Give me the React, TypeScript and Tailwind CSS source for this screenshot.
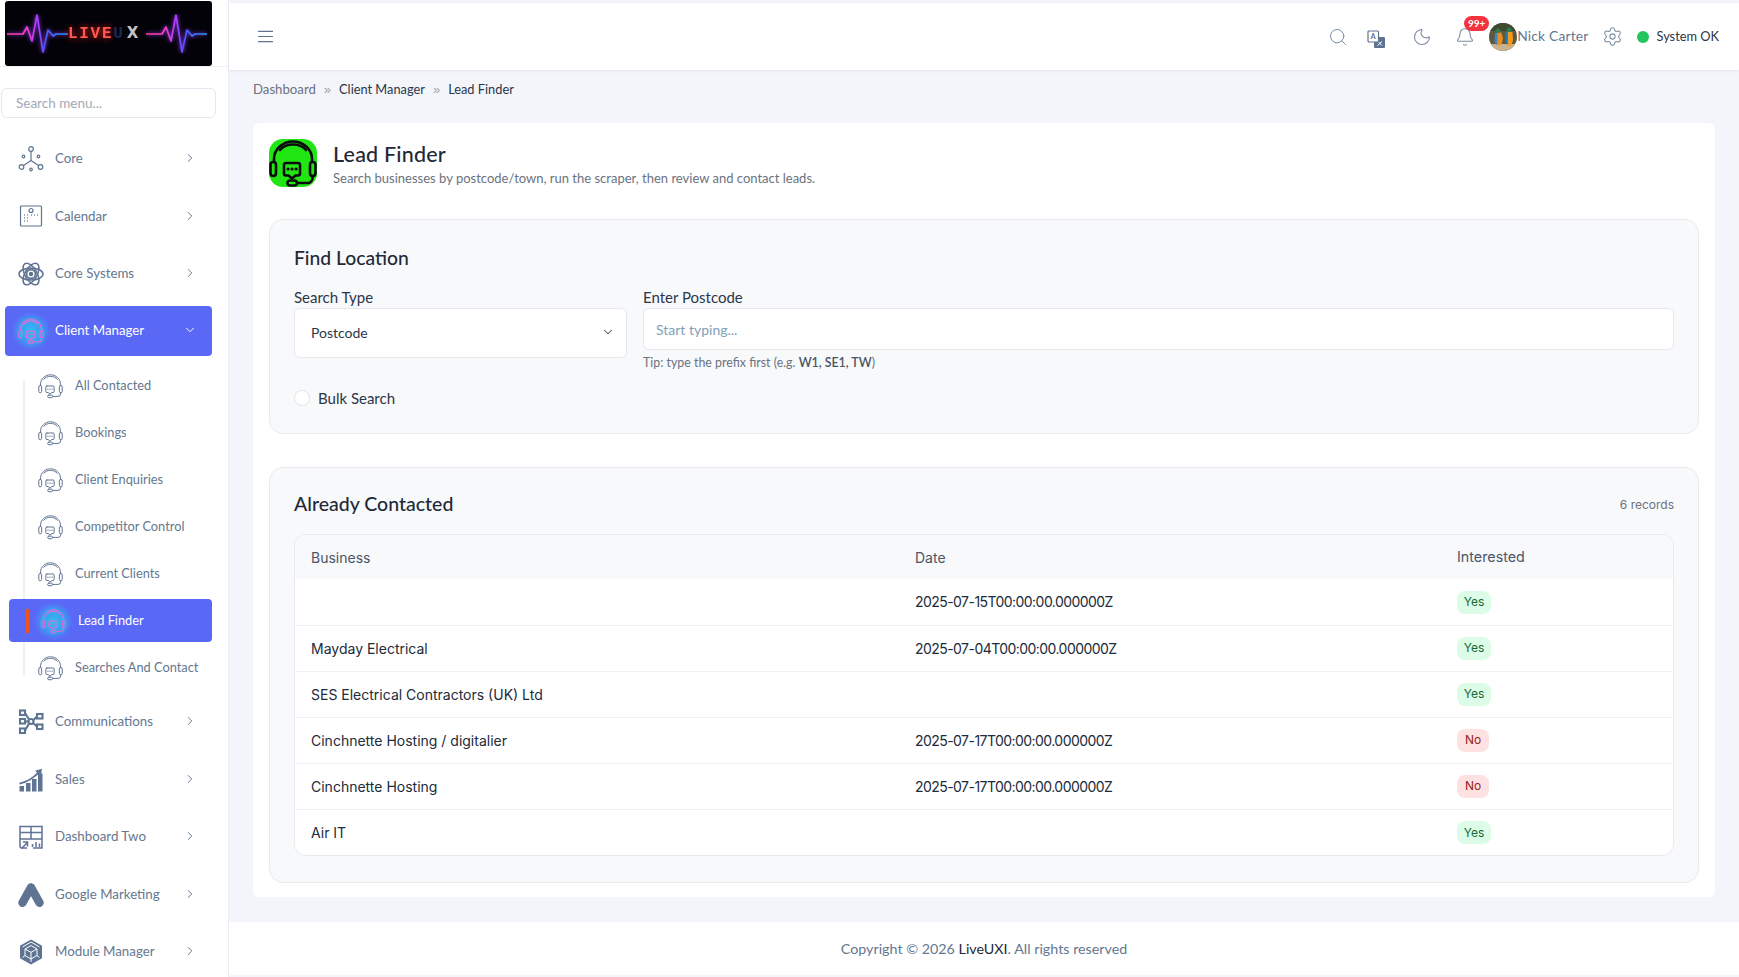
import React from "react";
import { Search, Moon, Bell, Settings, ChevronRight, ChevronDown } from "lucide-react";

const Headset = ({ className = "", neon = false, green = false }: { className?: string; neon?: boolean; green?: boolean }) => {
  const c = green ? "#0b0b0b" : neon ? "#f25fd6" : "#5f7392";
  return (
    <svg viewBox="0 0 48 48" fill="none" stroke={c} strokeWidth={green ? 2.6 : 1.9} strokeLinecap="round" strokeLinejoin="round" className={className}>
      <path d="M5 23V20C5 10 14 2.500 24 2.500S43 10 43 20v3" />
      <path d="M11 11C14 7.500 19 5.500 24 5.500S34 7.500 37 11" />
      <rect x="1.500" y="23" width="5.500" height="14" rx="2.700" />
      <rect x="41" y="23" width="5.500" height="14" rx="2.700" />
      <path d="M17 24h12a2 2 0 0 1 2 2v8.500a2 2 0 0 1-2 2h-2.500L23 39.500 19.500 36.500H17a2 2 0 0 1-2-2V26a2 2 0 0 1 2-2z" />
      <path d="M19 30h.2M23 30h.2M27 30h.2" strokeWidth={green ? 3 : 2.2} />
      <path d="M43.500 37v2a5 5 0 0 1-5 5H28" />
      <rect x="18.500" y="41.500" width="9.500" height="5" rx="2.500" />
    </svg>
  );
};

const NeonHeadset = ({ className = "" }: { className?: string }) => (
  <span className="flex p-[6px] -m-[6px] shrink-0 bg-[radial-gradient(circle,rgba(34,211,238,0.8)_0%,rgba(34,211,238,0.4)_45%,rgba(34,211,238,0)_72%)]">
    <Headset neon className={className + " drop-shadow-[0_0_1px_#22d3ee]"} />
  </span>
);

const I = "w-[26px] h-[26px]";
const CoreIcon = () => (
  <svg viewBox="0 0 26 26" fill="none" stroke="#5f7392" strokeWidth="1.2" className={I}>
    <circle cx="13" cy="3" r="2.300" /><circle cx="3.500" cy="21" r="2.300" /><circle cx="22.500" cy="21" r="2.300" />
    <circle cx="5.500" cy="10.500" r="1.300" /><circle cx="20.500" cy="10.500" r="1.300" /><circle cx="13" cy="23.500" r="1.300" />
    <path d="M13 5.300V14.500M13 14.500L5.500 19.500M13 14.500L20.500 19.500" />
  </svg>
);
const CalendarIcon = () => (
  <svg viewBox="0 0 26 26" fill="none" stroke="#5f7392" strokeWidth="1.2" className={I}>
    <rect x="2.500" y="2" width="21" height="20" rx="1" />
    <circle cx="13" cy="6.500" r="2" />
    <path d="M6 11h.8M9 11h.8M16 11h.8M19 11h.8M6 14h.8M9 14h.8M13 11h.8M6 17h.8M9 17h.8" strokeWidth="1.300" />
  </svg>
);
const AtomIcon = () => (
  <svg viewBox="0 0 26 26" fill="none" stroke="#5f7392" strokeWidth="1.500" className={I}>
    <ellipse cx="13" cy="13" rx="12" ry="6" />
    <ellipse cx="13" cy="13" rx="12" ry="6" transform="rotate(60 13 13)" />
    <ellipse cx="13" cy="13" rx="12" ry="6" transform="rotate(120 13 13)" />
    <circle cx="13" cy="13" r="4.500" strokeWidth="1.800" />
    <circle cx="13" cy="13" r="1.500" fill="#5f7392" />
  </svg>
);
const NetIcon = () => (
  <svg viewBox="0 0 26 26" fill="none" stroke="#5f7392" strokeWidth="2.100" className={I}>
    <rect x="2" y="1.500" width="5" height="4.500" /><rect x="2" y="10" width="5" height="4.500" /><rect x="2" y="19.500" width="5" height="4.500" />
    <rect x="19" y="5" width="5.500" height="4.500" /><rect x="19" y="15.500" width="5.500" height="4.500" />
    <circle cx="13" cy="12.500" r="2.500" />
    <path d="M7 4l4 6.500M7 12.500h3.500M7 21.500l4-7M15 11.500l4-4M15 14l4 3.500" />
  </svg>
);
const SalesIcon = () => (
  <svg viewBox="0 0 26 26" fill="#5f7392" className={I}>
    <rect x="1.500" y="19" width="4.500" height="5.500" /><rect x="8" y="16" width="4.500" height="8.500" /><rect x="14" y="12" width="4.500" height="12.500" /><rect x="20" y="6.500" width="4.500" height="18" />
    <path d="M1.500 15.500C8 14.500 14 11 19 5.500l-2-1.800 7-2-1 6.500-1.800-1.700C15 12 9 16 1.500 17.500z" />
  </svg>
);
const TableIcon = () => (
  <svg viewBox="0 0 26 26" fill="none" stroke="#5f7392" strokeWidth="1.500" className={I}>
    <path d="M9 24H4a2 2 0 0 1-2-2V2.500h22V24h-9" />
    <path d="M2 8.500h22M2 15h22M13 2.500V15" />
    <path d="M3.500 24.500l6-6M5 18h4.500v4.500" />
    <path d="M14.500 20v3M18 18v5M21.500 19.500v3.500" />
  </svg>
);
const AdsIcon = () => (
  <svg viewBox="0 0 26 26" fill="none" stroke="#5f7392" strokeWidth="8.500" strokeLinecap="round" className={I}>
    <path d="M13 5.500L4.500 20.700M13 5.500L21.500 20.700" />
  </svg>
);
const CubeIcon = () => (
  <svg viewBox="0 0 26 26" fill="#5f7392" className={I}>
    <path d="M13 .5l11 6.200v12.600l-11 6.200L2 19.300V6.700z" />
    <path d="M13 6.500l6 3.500v6.500l-6 3.500-6-3.500V10zM13 3L4.500 8M13 3L21.500 8M4.500 18.500L7 16.500M21.500 18.500L19 16.500M13 13.300L7 10M13 13.300l6-3.300M13 13.300V20M13 20v3" fill="none" stroke="#fff" strokeWidth="1" />
  </svg>
);

const Pulse = ({ className = "" }: { className?: string }) => (
  <svg viewBox="0 0 61 40" fill="none" className={className}>
    <defs>
      <linearGradient id="pg" gradientUnits="userSpaceOnUse" x1="0" x2="61" y1="0" y2="0">
        <stop offset="0" stopColor="#ff3d9a" /><stop offset="0.3" stopColor="#ff3dc0" /><stop offset="0.48" stopColor="#b43cff" /><stop offset="0.62" stopColor="#4a55ff" /><stop offset="1" stopColor="#1fa0ff" />
      </linearGradient>
    </defs>
    <path d="M0 20H16L20 13 25 27 30 1 36 38 41 16 46 22 49 20H61" stroke="url(#pg)" strokeWidth="1.700" strokeLinejoin="round" className="drop-shadow-[0_0_2px_#a040ff]" />
  </svg>
);

const Avatar = () => (
  <svg viewBox="0 0 28 28" className="w-[28px] h-[28px] rounded-full shrink-0">
    <rect width="28" height="28" fill="#5f5a3f" />
    <rect y="0" width="28" height="8" fill="#3f4a30" />
    <rect y="21" width="28" height="7" fill="#cbb18c" />
    <circle cx="9" cy="8" r="2.500" fill="#2e7d4f" />
    <circle cx="20" cy="7" r="2.500" fill="#2e7d4f" />
    <path d="M8 10l4.500-.5 1.500 6-1.500 6-3.500 1-1.500-5z" fill="#f08a1c" />
    <path d="M6 10l2.500 0 0 7-1 5.500-2-4z" fill="#2f8bc9" />
    <path d="M19 9l4.500 0 .5 8-1.500 5.500-3 .5-1.500-6z" fill="#f39a1e" />
    <path d="M16.500 9.500l2.500-.5 0 7-1 6-1.500-4z" fill="#1e7fb8" />
  </svg>
);

const TranslateIcon = () => (
  <svg viewBox="0 0 18 18" className="w-[18px] h-[18px]">
    <rect x="7" y="7" width="11" height="11" rx="1" fill="#5f7392" />
    <path d="M10.500 15.500l4.500-4M11 11.500l4 4" stroke="#fff" strokeWidth="1" fill="none" />
    <rect x="1" y="1" width="10.500" height="11" rx="1" fill="#fff" stroke="#5f7392" strokeWidth="1.200" />
    <text x="6.200" y="9.300" fontSize="7.500" textAnchor="middle" fontWeight="700" fill="#5f7392">A</text>
  </svg>
);

const Item = ({ icon, label, tight = false }: { icon: React.ReactNode; label: string; tight?: boolean }) => (
  <div className={"flex h-[50px] items-center pl-[13px] pr-[15px] ml-[5px] w-[207px] " + (tight ? "mb-[6.5px]" : "mb-[7.5px]")}>
    <span className="w-[26px] shrink-0 flex">{icon}</span>
    <span className="ml-[11px] text-[13.3px] text-[#64778f]">{label}</span>
    <ChevronRight className="ml-auto w-[14px] h-[14px] text-[#64778f] -translate-y-px" strokeWidth={1.700} />
  </div>
);

const SubItem = ({ label }: { label: string }) => (
  <div className="flex h-[47px] items-center pl-[38px]">
    <Headset className="w-[25px] h-[26px] shrink-0" />
    <span className="ml-[12px] text-[12.8px] text-[#64778f]">{label}</span>
  </div>
);

const Sidebar = () => (
  <aside className="w-[229px] shrink-0 bg-white border-r border-[#eceef3] h-full overflow-hidden">
    <div className="h-[67px] pt-px border-b border-[#eef0f4]">
      <div className="mx-[5px] w-[207px] h-[65px] rounded-[3px] bg-[#020208] flex items-center pl-[2px] overflow-hidden">
        <Pulse className="w-[61px] h-[40px] shrink-0" />
        <span className="font-['Liberation_Mono'] font-bold text-[16px] tracking-[1.700px] text-[#ff5a50] drop-shadow-[0_0_3px_#ff2020]">LIVE</span>
        <span className="font-['Liberation_Mono'] font-bold text-[16px] text-[#1a2a55] blur-[0.6px]">U</span>
        <span className="ml-[4px] font-['DejaVu_Sans'] font-bold text-[15px] text-[#c4c4c4]">X</span>
        <Pulse className="w-[61px] h-[40px] shrink-0 ml-[8px]" />
      </div>
    </div>
    <div className="pl-[1px] pt-[21px] pb-[16px]">
      <input placeholder="Search menu..." className="w-[215px] h-[30px] px-[14px] rounded-[6px] border border-[#e4e6f0] text-[13.5px] outline-none placeholder:text-[#a3a9b3]" />
    </div>
    <Item icon={<CoreIcon />} label="Core" />
    <Item icon={<CalendarIcon />} label="Calendar" />
    <Item icon={<AtomIcon />} label="Core Systems" tight />
    <div className="flex h-[50px] items-center pl-[13px] pr-[15px] ml-[5px] w-[207px] rounded-[4px] bg-[#5a68f6] mb-[6.5px]">
      <span className="w-[26px] shrink-0 flex"><NeonHeadset className="w-[26px] h-[26px]" /></span>
      <span className="ml-[11px] text-[13.3px] text-white">Client Manager</span>
      <ChevronDown className="ml-auto w-[14px] h-[14px] text-white -translate-y-px" strokeWidth={1.700} />
    </div>
    <div className="relative mb-[6px]">
      <div className="absolute left-[23px] top-[18px] bottom-[15px] w-[2px] bg-[#eeeff2]" />
      <SubItem label="All Contacted" />
      <SubItem label="Bookings" />
      <SubItem label="Client Enquiries" />
      <SubItem label="Competitor Control" />
      <SubItem label="Current Clients" />
      <div className="h-[47px] flex items-center">
        <div className="relative ml-[9px] w-[203px] h-[43px] rounded-[4px] bg-[#5a68f6] flex items-center pl-[32px]">
          <span className="absolute left-[17px] top-[10px] w-[3px] h-[24px] bg-[#f0541e]" />
          <NeonHeadset className="w-[25px] h-[26px]" />
          <span className="ml-[12px] text-[12.8px] text-white">Lead Finder</span>
        </div>
      </div>
      <SubItem label="Searches And Contact" />
    </div>
    <Item icon={<NetIcon />} label="Communications" />
    <Item icon={<SalesIcon />} label="Sales" />
    <Item icon={<TableIcon />} label="Dashboard Two" />
    <Item icon={<AdsIcon />} label="Google Marketing" />
    <Item icon={<CubeIcon />} label="Module Manager" />
  </aside>
);

const Header = () => (
  <header className="h-[67px] mt-[3px] bg-white shadow-[0_1px_3px_rgba(30,40,80,0.08)] flex items-center pl-[29px] pr-[20px] shrink-0">
    <svg viewBox="0 0 16 14" className="w-[15px] h-[13px]" fill="none" stroke="#5f7392" strokeWidth="1.300">
      <path d="M0 1.500h16M0 7h16M0 12.500h16" />
    </svg>
    <div className="ml-auto flex items-center">
      <Search className="w-[20px] h-[20px] text-[#7b8ca3]" strokeWidth={1.200} />
      <span className="ml-[19px] flex translate-y-[2px]"><TranslateIcon /></span>
      <Moon className="ml-[27px] w-[20px] h-[20px] text-[#7b8ca3]" strokeWidth={1.300} />
      <span className="relative ml-[23px] flex">
        <Bell className="w-[20px] h-[20px] text-[#7b8ca3]" strokeWidth={1.300} />
        <span className="absolute left-[9px] -top-[11px] w-[25px] h-[15px] rounded-full bg-[#f5333f] text-white text-[10px] font-bold flex items-center justify-center">99+</span>
      </span>
      <span className="ml-[14px] relative"><Avatar /></span>
      <span className="text-[13.8px] text-[#64778f] tracking-[0.2px]">Nick Carter</span>
      <Settings className="ml-[13px] w-[21px] h-[21px] text-[#7b8ca3]" strokeWidth={1.200} />
      <span className="ml-[14px] w-[12px] h-[12px] rounded-full bg-[#22c55e]" />
      <span className="ml-[8px] text-[12.8px] text-[#2b3648]">System OK</span>
    </div>
  </header>
);

const rows = [
  ["", "2025-07-15T00:00:00.000000Z", "Yes"],
  ["Mayday Electrical", "2025-07-04T00:00:00.000000Z", "Yes"],
  ["SES Electrical Contractors (UK) Ltd", "", "Yes"],
  ["Cinchnette Hosting / digitalier", "2025-07-17T00:00:00.000000Z", "No"],
  ["Cinchnette Hosting", "2025-07-17T00:00:00.000000Z", "No"],
  ["Air IT", "", "Yes"],
];

const ContactTable = () => (
  <div className="rounded-[12px] border border-[#e8eaef] overflow-hidden bg-white">
    <table className="w-full table-fixed font-['Inter'] text-[14px] text-[#212b3a]">
      <colgroup><col className="w-[604px]" /><col className="w-[542px]" /><col /></colgroup>
      <thead>
        <tr className="h-[44px] bg-[#f8f9fb] text-left text-[#4a5568]">
          <th className="pl-[16px] font-normal">Business</th>
          <th className="pl-[16px] font-normal">Date</th>
          <th className="pl-[16px] font-normal text-[14.3px]">Interested</th>
        </tr>
      </thead>
      <tbody>
        {rows.map((r, i) => (
          <tr key={i} className={"h-[46px] " + (i < 5 ? "border-b border-[#f0f1f4]" : "")}>
            <td className="pl-[16px]">{r[0]}</td>
            <td className="pl-[16px] tracking-[-0.55px]">{r[1]}</td>
            <td className="pl-[16px]">
              {r[2] === "Yes" ? (
                <span className="inline-flex items-center justify-center w-[34px] h-[23px] rounded-[8px] bg-[#dcfce7] text-[#166534] text-[12px]">Yes</span>
              ) : (
                <span className="inline-flex items-center justify-center w-[32px] h-[23px] rounded-[8px] bg-[#fee2e2] text-[#991b1b] text-[12px]">No</span>
              )}
            </td>
          </tr>
        ))}
      </tbody>
    </table>
  </div>
);

export default function App() {
  return (
    <div className="flex h-[977px] w-[1739px] overflow-hidden bg-[#f4f5fa] font-['Lato',sans-serif]">
      <Sidebar />
      <div className="flex-1 min-w-0 flex flex-col">
        <Header />
        <div className="px-[24px] pt-[10px]">
          <nav className="h-[20px] flex items-center text-[12.8px] text-[#2b3648]">
            <span className="text-[#6b7280] text-[13.2px]">Dashboard</span>
            <span className="mx-[8px] text-[#9aa3b2] text-[13px] font-['Liberation_Sans']">»</span>
            <span>Client Manager</span>
            <span className="mx-[8px] text-[#9aa3b2] text-[13px] font-['Liberation_Sans']">»</span>
            <span>Lead Finder</span>
          </nav>
          <main className="mt-[23px] h-[774px] bg-white rounded-[6px] p-[16px]">
            <div className="flex items-start">
              <span className="w-[48px] h-[48px] rounded-[14px] bg-[#22e614] flex overflow-hidden shrink-0">
                <Headset green className="w-[48px] h-[48px]" />
              </span>
              <div className="ml-[16px] pt-[3px]">
                <h1 className="text-[21.5px] leading-[24px] font-medium text-[#1f2937] tracking-[0.2px]">Lead Finder</h1>
                <p className="mt-[3px] text-[13px] leading-[18px] text-[#6b7280]">Search businesses by postcode/town, run the scraper, then review and contact leads.</p>
              </div>
            </div>
            <section className="mt-[32px] h-[215px] border border-[#e8eaef] rounded-[14px] bg-[#f8f9fb] px-[24px] pt-[24px]">
              <h2 className="text-[19.3px] leading-[28px] font-medium text-[#1f2937]">Find Location</h2>
              <div className="mt-[15px] grid grid-cols-[333px_1fr] gap-x-[16px]">
                <div>
                  <label className="block text-[15px] leading-[20px] text-[#2b3648] mb-px">Search Type</label>
                  <div className="h-[50px] rounded-[6px] border border-[#e6e8ee] bg-white flex items-center pl-[16px] pr-[11px] pb-[2px] text-[14px] text-[#2b3648]">
                    Postcode
                    <ChevronDown className="ml-auto w-[14px] h-[14px] text-[#4b5563]" strokeWidth={1.800} />
                  </div>
                </div>
                <div>
                  <label className="block text-[15px] leading-[20px] text-[#2b3648] mb-px">Enter Postcode</label>
                  <input placeholder="Start typing..." className="block w-full h-[42px] rounded-[6px] border border-[#e6e8ee] bg-white px-[12px] text-[14px] outline-none placeholder:text-[#7fa0bb]" />
                  <p className="mt-[5px] text-[12.4px] leading-[16px] text-[#6b7280]">Tip: type the prefix first (e.g. <b className="font-semibold text-[#4b5563]">W1, SE1, TW</b>)</p>
                </div>
              </div>
              <div className="mt-[16px] flex items-center">
                <span className="w-[16px] h-[16px] rounded-full border border-[#e2e4ea] bg-white" />
                <span className="ml-[8px] text-[15px] text-[#2b3648]">Bulk Search</span>
              </div>
            </section>
            <section className="mt-[33px] h-[416px] border border-[#e8eaef] rounded-[14px] bg-[#f8f9fb] px-[24px] pt-[22px]">
              <div className="h-[28px] flex items-center justify-between">
                <h2 className="text-[19.5px] font-medium text-[#1f2937]">Already Contacted</h2>
                <span className="text-[12px] text-[#6b7280] font-['Inter'] translate-y-px">6 records</span>
              </div>
              <div className="mt-[16px]"><ContactTable /></div>
            </section>
          </main>
        </div>
        <footer className="mt-[25px] h-[53px] bg-white flex items-center justify-center text-[14.3px] text-[#64778f]">
          <span>Copyright © 2026 <span className="text-[#1f2937]">LiveUXI</span>. All rights reserved</span>
        </footer>
      </div>
    </div>
  );
}
